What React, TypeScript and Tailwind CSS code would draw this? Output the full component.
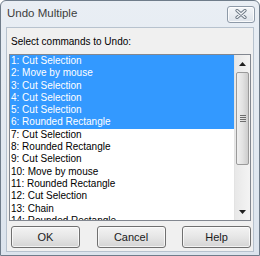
import React from "react";

const commands = [
  "1: Cut Selection",
  "2: Move by mouse",
  "3: Cut Selection",
  "4: Cut Selection",
  "5: Cut Selection",
  "6: Rounded Rectangle",
  "7: Cut Selection",
  "8: Rounded Rectangle",
  "9: Cut Selection",
  "10: Move by mouse",
  "11: Rounded Rectangle",
  "12: Cut Selection",
  "13: Chain",
  "14: Rounded Rectangle",
];

const selectedCount = 6;

const CloseButton = () => (
  <div className="w-[28px] h-[17px] rounded-[3px] border border-[#8e9aa8] bg-gradient-to-b from-[#f4f6f9] to-[#dde3ea] flex items-center justify-center shadow-[inset_0_0_0_1px_rgba(255,255,255,0.8)]">
    <svg width="12" height="10" viewBox="0 0 12 10">
      <path d="M2 1.5 L10 8.5 M10 1.5 L2 8.5" stroke="#6b7683" strokeWidth="3.2" strokeLinecap="round" />
      <path d="M2 1.5 L10 8.5 M10 1.5 L2 8.5" stroke="#f3f5f8" strokeWidth="1.4" strokeLinecap="round" />
    </svg>
  </div>
);

const Button = ({ label }: { label: string }) => (
  <button className="w-[69px] h-[22px] rounded-[3px] border border-[#707070] bg-gradient-to-b from-[#f3f3f3] via-[#e6e6e6] to-[#d4d4d4] text-[11px] text-[#1a1a1a] shadow-[inset_0_0_0_1px_rgba(255,255,255,0.7)]">
    {label}
  </button>
);

const Scrollbar = () => (
  <div className="w-[16px] h-full shrink-0 flex flex-col bg-gradient-to-r from-[#e8e8e8] to-[#f4f4f4] border-l border-[#e3e3e3]">
    <div className="h-[17px] flex items-center justify-center">
      <svg width="7" height="4" viewBox="0 0 7 4">
        <path d="M0 4 L3.5 0 L7 4 Z" fill="#202020" />
      </svg>
    </div>
    <div className="h-[93px] mx-[1px] rounded-[2px] border border-[#9a9a9a] bg-gradient-to-r from-[#f0f0f0] via-[#e2e2e2] to-[#cdcdcd] flex items-center justify-center">
      <div className="flex flex-col gap-[1px]">
        <div className="w-[6px] h-[1px] bg-[#6d6d6d]" />
        <div className="w-[6px] h-[1px] bg-[#6d6d6d]" />
        <div className="w-[6px] h-[1px] bg-[#6d6d6d]" />
        <div className="w-[6px] h-[1px] bg-[#6d6d6d]" />
      </div>
    </div>
    <div className="flex-1" />
    <div className="h-[17px] flex items-center justify-center">
      <svg width="7" height="4" viewBox="0 0 7 4">
        <path d="M0 0 L3.5 4 L7 0 Z" fill="#202020" />
      </svg>
    </div>
  </div>
);

const App = () => {
  return (
    <div className="w-[260px] h-[256px] flex flex-col border border-[#6f7c8a] rounded-t-[6px] bg-gradient-to-b from-[#e9eef4] to-[#dce4ed] font-['Liberation_Sans',Arial,sans-serif] overflow-hidden">
      {/* Title bar */}
      <div className="h-[26px] shrink-0 flex items-center justify-between pl-[6px] pr-[4px]">
        <span className="text-[11.5px] text-[#3d3d3d] leading-none">Undo Multiple</span>
        <CloseButton />
      </div>

      {/* Client area */}
      <div className="flex-1 mx-[5px] mb-[3px] bg-[#f0f0f0] border border-[#b7c2ce] flex flex-col">
        <div className="pt-[8px] pl-[4px] text-[10px] leading-[12px] text-black">
          Select commands to Undo:
        </div>

        <div className="mt-[6px] ml-[2px] mr-[2px] h-[167px] border border-[#828790] bg-white flex">
          <div className="flex-1 overflow-hidden">
            {commands.map((cmd, idx) => (
              <div
                key={idx}
                className={
                  idx < selectedCount
                    ? "h-[12.3px] leading-[12.3px] pl-[1px] text-[10px] bg-[#3399ff] text-white whitespace-nowrap"
                    : "h-[12.3px] leading-[12.3px] pl-[1px] text-[10px] text-black whitespace-nowrap"
                }
              >
                {cmd}
              </div>
            ))}
          </div>
          <Scrollbar />
        </div>

        <div className="mt-[5px] ml-[4px] mr-[2px] flex justify-between">
          <Button label="OK" />
          <Button label="Cancel" />
          <Button label="Help" />
        </div>
      </div>
    </div>
  );
};

export default App;
